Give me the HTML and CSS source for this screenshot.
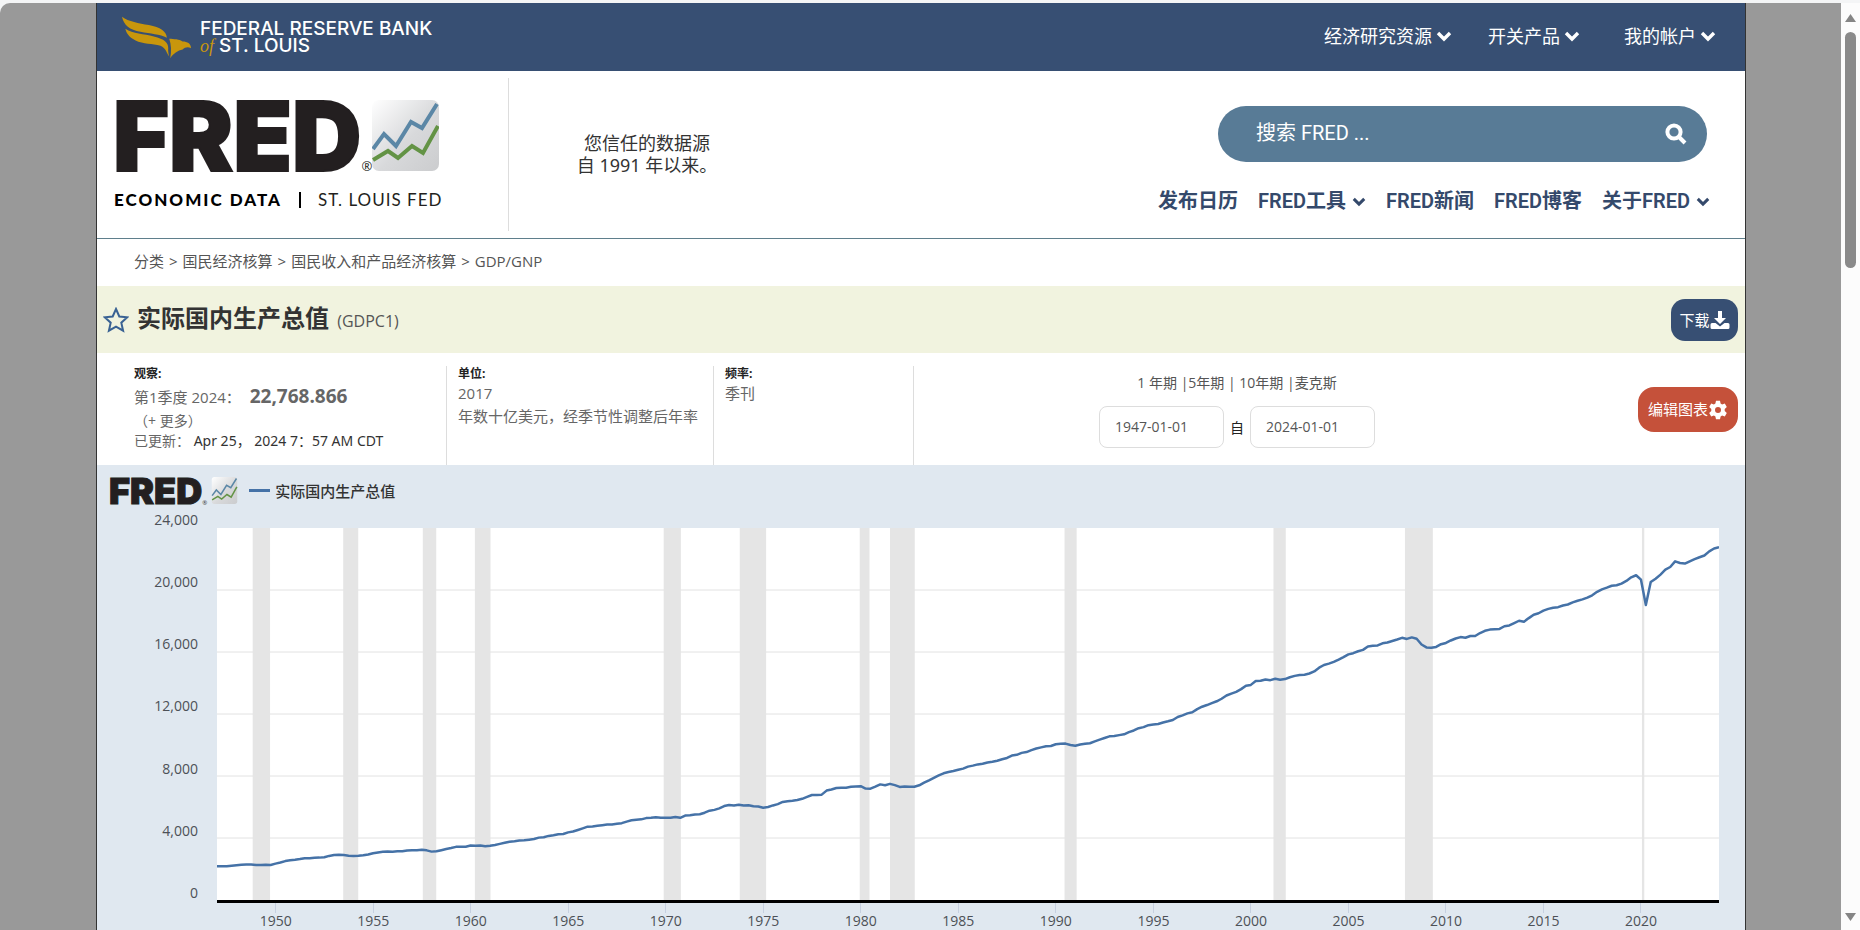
FILE: index.html
```html
<!DOCTYPE html>
<html lang="zh-CN">
<head>
<meta charset="utf-8">
<title>实际国内生产总值 (GDPC1) | FRED</title>
<link rel="stylesheet" href="styles.css">
</head>
<body>
<svg class="defs" aria-hidden="true">
  <defs>
    <linearGradient id="tile" x1="0" y1="0" x2="1" y2="1">
      <stop offset="0" stop-color="#ffffff"/><stop offset="0.55" stop-color="#d8d9db"/><stop offset="1" stop-color="#cbccce"/>
    </linearGradient>
    <symbol id="chart-mark" viewBox="0 0 67 71">
      <rect width="67" height="71" rx="7" fill="url(#tile)"/>
      <path d="M1 49 12 34 24 46 39 22 50 28 65 4" fill="none" stroke="#5b87a6" stroke-width="4"/>
      <path d="M1 60 16 51 26 58 40 46 51 53 66 26" fill="none" stroke="#639345" stroke-width="4"/>
    </symbol>
    <symbol id="chevron" viewBox="0 0 16 12">
      <path d="M2 3 8 9 14 3" fill="none" stroke="currentColor" stroke-width="3.4"/>
    </symbol>
  </defs>
</svg>
<div class="window">
  <div class="page">
    <header>
      <div class="topbar">
        <a class="bank" href="#">
          <svg class="eagle" viewBox="362 45 212 128" aria-hidden="true">
            <path d="M365 47C385 62 415 66 445 72C480 79 497 90 499 110C478 99 450 98 420 92C388 86 370 72 365 47Z"/>
            <path d="M375 83C398 98 430 98 460 106C492 114 503 124 503 140C502 150 504 158 506 166C499 158 496 140 480 134C455 126 430 130 404 117C388 109 378 98 375 83Z"/>
            <path d="M506 113C520 114 536 114 546 121C560 121 571 127 571 141C562 136 553 138 546 145C532 147 518 158 509 171C513 150 512 130 506 113Z"/>
          </svg>
          <span class="bank-name"><span>FEDERAL RESERVE BANK</span><span><i>of</i> ST. LOUIS</span></span>
        </a>
        <nav class="topnav">
          <a href="#">经济研究资源<svg><use href="#chevron"/></svg></a>
          <a href="#">开关产品<svg><use href="#chevron"/></svg></a>
          <a href="#">我的帐户<svg><use href="#chevron"/></svg></a>
        </nav>
      </div>
      <div class="masthead">
        <a class="brand" href="#">
          <span class="brand-top"><b class="fred">FRED</b><small>®</small><svg class="mark"><use href="#chart-mark"/></svg></span>
          <span class="brand-sub"><b>ECONOMIC DATA</b><i></i><span>ST. LOUIS FED</span></span>
        </a>
        <p class="tagline">您信任的数据源<br>自 1991 年以来。</p>
        <div class="tools">
          <form class="search">
            <input type="text" placeholder="搜索 FRED ..." aria-label="搜索 FRED">
            <button type="button" aria-label="搜索">
              <svg viewBox="0 0 22 22"><circle cx="9" cy="9" r="6.6"/><path d="m14 14 6 6"/></svg>
            </button>
          </form>
          <nav class="mainnav">
            <a href="#">发布日历</a>
            <a href="#">FRED工具<svg><use href="#chevron"/></svg></a>
            <a href="#">FRED新闻</a>
            <a href="#">FRED博客</a>
            <a href="#">关于FRED<svg><use href="#chevron"/></svg></a>
          </nav>
        </div>
      </div>
    </header>
    <nav class="crumbs"><a href="#">分类</a><span>&gt;</span><a href="#">国民经济核算</a><span>&gt;</span><a href="#">国民收入和产品经济核算</a><span>&gt;</span><a href="#">GDP/GNP</a></nav>
    <div class="titlebar">
      <svg class="star" viewBox="0 0 26 26" aria-hidden="true"><path d="m13 2 3.300 7.500 8 .8-6 5.400 1.800 8L13 19.600 5.900 23.700l1.800-8-6-5.400 8-.8z"/></svg>
      <h1>实际国内生产总值 <small>(GDPC1)</small></h1>
      <button class="btn download" type="button">下载<svg viewBox="0 0 20 20"><path d="M8 1h4v7h4l-6 6-6-6h4z"/><path d="M2 13h3.500l4.500 3.500 4.500-3.500H18q1.500 0 1.500 1.500v3Q19.500 19 18 19H2Q.5 19 .5 17.500v-3Q.5 13 2 13z"/></svg></button>
    </div>
    <section class="meta">
      <div class="cell first">
        <h2>观察:</h2>
        <p class="obs">第1季度 2024： <b>22,768.866</b></p>
        <p class="more">（+ 更多）</p>
        <p class="updated">已更新： <span>Apr 25， 2024 7：57 AM CDT</span></p>
      </div>
      <div class="cell">
        <h2>单位:</h2>
        <p>2017<br>年数十亿美元，经季节性调整后年率</p>
      </div>
      <div class="cell">
        <h2>频率:</h2>
        <p>季刊</p>
      </div>
      <div class="controls">
        <div class="range">
          <p><a href="#">1 年期</a> |<a href="#">5年期</a> | <a href="#">10年期</a> |<a href="#">麦克斯</a></p>
          <div class="dates">
            <input type="text" id="from" value="1947-01-01" aria-label="开始日期">
            <label for="to">自</label>
            <input type="text" id="to" value="2024-01-01">
          </div>
        </div>
        <button class="btn edit" type="button">编辑图表<svg viewBox="0 0 20 20"><path fill-rule="evenodd" d="M8 .8h4l.6 2.800 1.500.9 2.700-.9 2 3.500-2.100 1.900v2l2.100 1.900-2 3.500-2.700-.9-1.500.9-.6 2.800H8l-.6-2.800-1.500-.9-2.700.9-2-3.500L3.300 11V9L1.200 7.100l2-3.500 2.700.9 1.500-.9zM10 7a3 3 0 1 0 0 6 3 3 0 0 0 0-6z"/></svg></button>
      </div>
    </section>
    <section class="chart">
      <div class="legend">
        <b class="fred">FRED</b><small>®</small><svg class="mark"><use href="#chart-mark"/></svg>
        <i></i><span>实际国内生产总值</span>
      </div>
      <div class="figure">
        <ul class="yaxis"><li>24,000</li><li>20,000</li><li>16,000</li><li>12,000</li><li>8,000</li><li>4,000</li><li>0</li></ul>
        <svg class="plot" id="plot" viewBox="0 0 308 24000" preserveAspectRatio="none" role="img" aria-label="实际国内生产总值"></svg>
        <ol class="xaxis"><li>1950</li><li>1955</li><li>1960</li><li>1965</li><li>1970</li><li>1975</li><li>1980</li><li>1985</li><li>1990</li><li>1995</li><li>2000</li><li>2005</li><li>2010</li><li>2015</li><li>2020</li></ol>
      </div>
    </section>
  </div>
  <div class="scrollbar" aria-hidden="true">
    <svg viewBox="0 0 13 10"><path d="M6.500 1 12 9H1z"/></svg>
    <i></i>
    <svg class="down" viewBox="0 0 13 10"><path d="M6.500 9 1 1h11z"/></svg>
  </div>
</div>
<script src="chart.js"></script>
</body>
</html>
```
FILE: styles.css
```css
* { box-sizing: border-box; }
body {
  margin: 0;
  background: #f4f5f6;
  color: #333;
  font-family: "Open Sans", "Noto Sans CJK SC", sans-serif;
  font-size: 15px;
}
h1, h2, p, ul, ol { margin: 0; padding: 0; list-style: none; }
a { color: inherit; text-decoration: none; }
input, button { font: inherit; }
.defs { position: absolute; width: 0; height: 0; }

.window { display: flex; height: 100vh; padding-top: 3px; overflow: hidden; }
.page {
  flex: 1;
  min-width: 0;
  padding: 0 95px 0 96px;
  background: #999;
  border-top-left-radius: 10px;
}
.page > * { background: #fff; border: 0 solid #333; border-width: 0 1px; }
.scrollbar {
  display: flex;
  flex-direction: column;
  align-items: center;
  width: 19px;
  padding: 10px 0 8px;
  background: #fcfcfc;
}
.scrollbar svg { width: 13px; height: 10px; fill: #858585; }
.scrollbar i { width: 11px; height: 26%; margin-top: 9px; border-radius: 6px; background: #8a8a8a; }
.scrollbar .down { margin-top: auto; }

.topbar {
  display: flex;
  align-items: center;
  justify-content: space-between;
  height: 68px;
  padding: 0 29px 0 24px;
  background: #374f73;
  color: #fff;
}
.bank { display: flex; align-items: center; gap: 8px; }
.eagle { width: 71px; height: 43px; fill: #c8960c; }
.bank-name { font: 500 19px/17px Inter, sans-serif; }
.bank-name > span { display: block; height: 17px; }
.bank-name i { font: italic 18px/16px "Liberation Serif", serif; color: #c8960c; }
.topnav { display: flex; gap: 36px; font-size: 18px; line-height: 24px; padding-bottom: 2px; }
.topnav a { display: flex; align-items: center; gap: 4px; }
.topnav a:last-child { padding-left: 8px; }
.topnav svg { width: 16px; height: 12px; }

.masthead { display: flex; height: 168px; border-bottom: 1px solid #5f7f8c; }
.brand {
  width: 412px;
  margin: 7px 0;
  padding: 20px 0 0 16px;
  border-right: 1px solid #ddd;
  color: #231f20;
}
.fred { font-family: Inter, sans-serif; font-weight: 900; }
.brand-top { display: flex; align-items: flex-end; width: 326px; height: 74px; }
.brand-top .fred { font-size: 96px; line-height: 72px; -webkit-text-stroke: 2px #231f20; }
.brand-top small { font-size: 13px; line-height: 12px; }
.brand-top .mark { flex: none; width: 67px; height: 71px; margin: 0 0 1px auto; }
.brand-sub { display: flex; align-items: center; gap: 17px; margin-top: 18px; padding-left: 1px; font: 17px/20px Lato, sans-serif; letter-spacing: 1px; }
.brand-sub b { font-weight: 900; letter-spacing: 2px; color: #000; }
.brand-sub i { width: 2px; height: 16px; background: #000; }
.tagline { width: 276px; padding-top: 61px; font: 18px/22px "Noto Sans", "Noto Sans CJK SC", sans-serif; text-align: center; color: #333; }
.tools { display: flex; flex-direction: column; align-items: flex-end; gap: 25px; margin-left: auto; padding: 35px 38px 0 0; font-family: Roboto, "Noto Sans CJK SC", sans-serif; }
.search { display: flex; align-items: center; width: 489px; height: 56px; padding: 0 20px 0 38px; border-radius: 28px; background: #587b96; }
.search input { flex: 1; min-width: 0; padding: 0 0 3px; border: 0; outline: 0; background: none; color: #fff; font-size: 20px; }
.search input::placeholder { color: #fff; opacity: 1; }
.search button { width: 22px; height: 22px; padding: 0; border: 0; background: none; }
.search svg { display: block; width: 22px; height: 22px; fill: none; stroke: #fff; stroke-width: 4; }
.mainnav { display: flex; gap: 20px; margin-right: -3px; font-size: 20px; line-height: 28px; font-weight: 600; color: #34496b; }
.mainnav a { display: flex; align-items: center; gap: 6px; }
.mainnav svg { width: 14px; height: 11px; }

.crumbs { display: flex; gap: 5px; height: 47px; padding-left: 37px; font-size: 15px; line-height: 44px; color: #555; }
.titlebar { display: flex; align-items: center; height: 67px; padding: 0 7px 0 6px; background: #f1f3df; }
.star { width: 26px; height: 26px; fill: none; stroke: #3a6293; stroke-width: 2; }
h1 { margin-left: 8px; font-size: 24px; line-height: 36px; color: #333; }
h1 small { margin-left: 2px; font-size: 16px; font-weight: 500; color: #555; }
.btn { display: flex; align-items: center; justify-content: center; flex: none; padding: 0; border: 0; color: #fff; font-size: 15px; }
.btn svg { width: 20px; height: 20px; fill: #fff; }
.download { width: 67px; height: 42px; margin-left: auto; border-radius: 14px; background: #374f73; }
.edit { width: 100px; height: 45px; border-radius: 16px; background: #c5513a; }

.meta { display: grid; grid-template-columns: 350px 267px 200px 1fr; height: 112px; padding-top: 13px; color: #666; line-height: 23px; }
.cell { padding-left: 11px; border-right: 1px solid #ddd; }
.first { padding-left: 37px; }
h2 { font-size: 12px; line-height: 16px; color: #222; }
.obs { line-height: 28px; }
.obs b { margin-left: 5px; font-size: 19px; }
.more { line-height: 20px; font-size: 14px; }
.updated { line-height: 20px; font-size: 14px; }
.updated span { font-family: "Noto Sans", "Noto Sans CJK SC", sans-serif; color: #333; }
.controls { display: flex; align-items: center; padding: 0 7px 12px 0; }
.range { flex: 1; padding-right: 78px; text-align: center; }
.range p { font-size: 14px; line-height: 24px; margin-bottom: 11px; color: #555; }
.dates { display: flex; justify-content: center; align-items: center; gap: 6px; font-size: 14px; color: #222; }
.dates input { width: 125px; height: 42px; padding: 0 15px 2px; border: 1px solid #ddd; border-radius: 8px; background: #fff; color: #555; }

.chart { height: 500px; padding: 0 26px 0 12px; background: #e0e8f0; }
.legend { display: flex; align-items: center; height: 51px; color: #333; }
.legend .fred { font-size: 36px; line-height: 28px; color: #231f20; -webkit-text-stroke: 1px #231f20; }
.legend small { align-self: flex-end; padding-bottom: 9px; font-size: 6px; }
.legend .mark { width: 27px; height: 27px; margin-left: 4px; }
.legend i { width: 21px; height: 3px; margin: 0 5px 0 11px; background: #4572a7; }
.legend span { font-weight: 500; }
.figure { display: grid; grid-template: 375px auto / 89px 1fr; column-gap: 19px; padding-top: 12px; font-size: 14px; line-height: 16px; color: #4d5157; }
.yaxis { display: flex; flex-direction: column; justify-content: space-between; margin: -16px 0 2px; text-align: right; }
.plot { display: block; width: 100%; height: 100%; background: #fff; border-bottom: 3px solid #000; }
.plot rect { fill: #e5e5e5; }
.plot line { stroke: #e2e2e2; stroke-width: 1; vector-effect: non-scaling-stroke; shape-rendering: crispEdges; }
.plot polyline { fill: none; stroke: #4572a7; stroke-width: 2.500; stroke-linejoin: round; vector-effect: non-scaling-stroke; }
.xaxis { grid-column: 2; display: grid; grid-template-columns: repeat(15, minmax(0, 10fr)) minmax(0, 3fr); padding-left: 10px; text-align: center; }
.xaxis li::before { content: ""; display: block; width: 1px; height: 10px; margin: 0 auto; background: #c6d0e0; }
```
FILE: chart.js
```js
// Quarterly real GDP, 1947 Q1 to 2024 Q1, billions of chained 2017 dollars
const gdp = [
  2183,2177,2172,2207, 2240,2277,2290,2292, 2261,2253,2276,2257, 2346,2418,2511,2559,
  2594,2639,2693,2699, 2728,2734,2754,2844, 2897,2919,2903,2859, 2845,2848,2881,2937,
  3021,3070,3111,3130, 3118,3144,3141,3193, 3213,3206,3237,3204, 3121,3141,3214,3289,
  3352,3428,3430,3440, 3517,3498,3515,3470, 3494,3553,3621,3692, 3758,3792,3839,3851,
  3894,3937,4024,4050, 4136,4181,4246,4259, 4362,4417,4515,4620, 4732,4748,4788,4828,
  4870,4873,4919,4957, 5058,5142,5182,5202, 5284,5300,5335,5309, 5301,5308,5357,5300,
  5444,5473,5518,5531, 5633,5761,5815,5912, 6059,6125,6092,6150, 6097,6112,6054,6031,
  5957,6000,6102,6185, 6324,6370,6405,6451, 6528,6655,6775,6775, 6796,7059,7130,7226,
  7239,7247,7300,7319, 7342,7190,7182,7316, 7459,7404,7492,7411, 7296,7329,7301,7304,
  7400,7569,7720,7881, 8035,8174,8253,8320, 8401,8475,8604,8668, 8749,8789,8873,8920,
  8986,9083,9162,9319, 9368,9491,9546,9673, 9772,9846,9919,9939, 10047,10084,10091,9999,
  9952,10030,10080,10115, 10236,10347,10450,10559, 10576,10638,10689,10834,
  10939,11087,11152,11280, 11320,11354,11450,11528, 11614,11808,11914,12038,
  12116,12317,12471,12578, 12704,12821,12983,13192, 13316,13427,13605,13828,
  13878,14131,14145,14230, 14183,14272,14215,14254, 14373,14461,14520,14538,
  14614,14744,14989,15163, 15249,15367,15513,15671, 15845,15923,16048,16137,
  16354,16396,16421,16562, 16612,16713,16810,16915, 16843,16943,16854,16485,
  16298,16269,16326,16503, 16583,16743,16872,16961, 16921,17035,17031,17223,
  17367,17445,17470,17490, 17662,17710,17861,18016, 17954,18186,18407,18500,
  18667,18782,18857,18892, 19002,19063,19198,19304, 19398,19507,19661,19882,
  20044,20151,20276,20305, 20415,20585,20818,20951, 20666,19035,20512,20724,
  20991,21310,21483,21848, 21739,21708,21851,21990, 22112,22225,22491,22679, 22769
];

// Recessions, as start and end year
const recessions = [
  [1948.83, 1949.72], [1953.47, 1954.24], [1957.55, 1958.24], [1960.22, 1961.02],
  [1969.90, 1970.78], [1973.80, 1975.15], [1979.95, 1980.45], [1981.50, 1982.77],
  [1990.45, 1991.07], [2001.16, 2001.79], [2007.90, 2009.33], [2020.05, 2020.17]
];

const plot = document.getElementById("plot");
const quarter = year => (year - 1947) * 4;

function add(name, attrs) {
  const el = document.createElementNS("http://www.w3.org/2000/svg", name);
  for (const key in attrs) el.setAttribute(key, attrs[key]);
  plot.append(el);
}

for (let v = 4000; v < 24000; v += 4000) {
  add("line", { x1: 0, x2: 308, y1: 24000 - v, y2: 24000 - v });
}
for (const [start, end] of recessions) {
  add("rect", { x: quarter(start), y: 0, width: quarter(end) - quarter(start), height: 24000 });
}
add("polyline", { points: gdp.map((v, i) => i + "," + (24000 - v)).join(" ") });
```
